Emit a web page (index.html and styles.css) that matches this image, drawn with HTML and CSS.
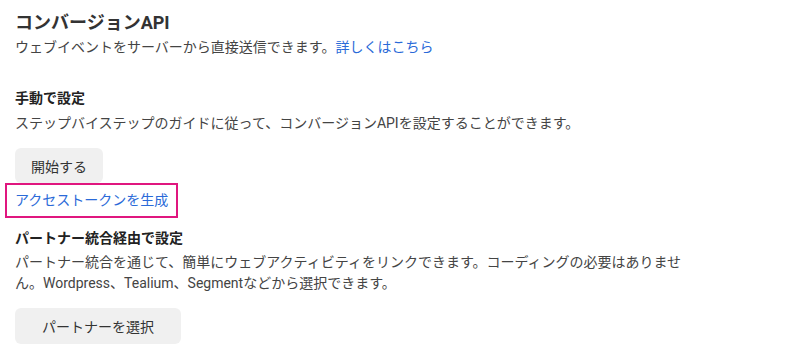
FILE: index.html
```html
<!DOCTYPE html>
<html lang="ja">

<head>
    <meta charset="UTF-8">
    <meta name="viewport" content="width=device-width, initial-scale=1.0">
    <title>コンバージョンAPI</title>
    <link rel="stylesheet" href="styles.css">
</head>

<body>
    <div class="capi">
        <h1 class="title">コンバージョンAPI</h1>
        <p class="sub">ウェブイベントをサーバーから直接送信できます。<a href="javascript:" class="link">詳しくはこちら</a></p>

        <div class="section manual">
            <h2>手動で設定</h2>
            <p>ステップバイステップのガイドに従って、コンバージョンAPIを設定することができます。</p>
            <button class="btn start">開始する</button>
            <div>
                <a href="javascript:" class="link token">アクセストークンを生成</a>
            </div>
        </div>

        <div class="section partner">
            <h2>パートナー統合経由で設定</h2>
            <p>パートナー統合を通じて、簡単にウェブアクティビティをリンクできます。コーディングの必要はありません。Wordpress、Tealium、Segmentなどから選択できます。</p>
            <button class="btn pick">パートナーを選択</button>
        </div>
    </div>
</body>

</html>
```

FILE: styles.css
```css
* {
    margin: 0;
    padding: 0;
    box-sizing: border-box;
}

body {
    background: #fff;
    color: #333;
    font-family: Roboto, "Noto Sans CJK JP", sans-serif;
    font-size: 14px;
}

a {
    text-decoration: none;
}

.link {
    color: #2a6ad8;
}

.capi {
    width: 700px;
    padding: 10px 15px;
}

.title {
    font-size: 18px;
    font-weight: bold;
    line-height: 25px;
    color: #333;
}

.sub {
    line-height: 24px;
    color: #444;
}

.section h2 {
    font-size: 14px;
    font-weight: bold;
    line-height: 20px;
    color: #222;
}

.section p {
    line-height: 20px;
    color: #444;
}

.manual {
    margin-top: 29px;
}

.manual p {
    margin-top: 5px;
}

.partner {
    margin-top: 10px;
}

.partner p {
    margin-top: 4px;
    width: 685px;
    line-height: 20.5px;
}

.btn {
    display: block;
    border: none;
    background: #f0f0f0;
    color: #333;
    font: 14px Roboto, "Noto Sans CJK JP", sans-serif;
    border-radius: 6px;
    cursor: pointer;
}

.start {
    margin-top: 15px;
    height: 35px;
    padding: 0 16px;
}

.pick {
    margin-top: 15px;
    height: 36px;
    padding: 0 27px;
}

/* 生成リンクの枠 */
.token {
    display: inline-block;
    margin-left: -10px;
    padding: 5px 8px;
    line-height: 21px;
    border: 2px solid #e0167f;
}
```
